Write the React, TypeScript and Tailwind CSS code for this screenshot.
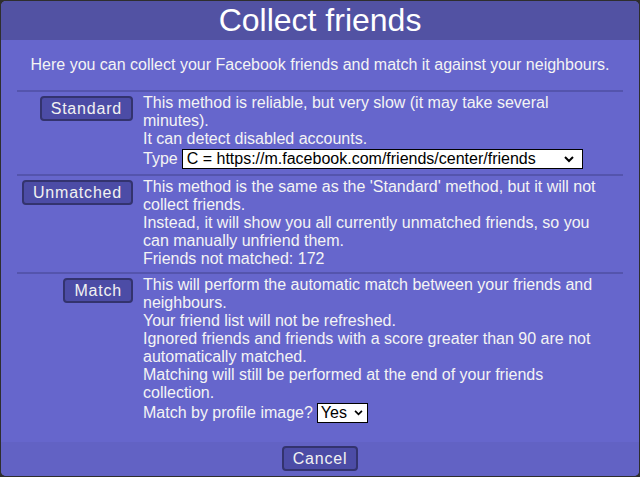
import React from "react";

const font = { fontFamily: '"Liberation Sans", Arial, sans-serif' };

function Btn({ children }: { children: React.ReactNode }) {
  return (
    <button className="h-[25px] px-[9px] bg-[#4c4ca6] border-2 border-[#33336e] rounded-[4px] text-[16px] leading-[18px] text-[#f2f2f2] tracking-[0.8px]">
      {children}
    </button>
  );
}

function Row({ btn, children }: { btn: string; children: React.ReactNode }) {
  return (
    <div className="grid grid-cols-[126px_1fr] border-t-2 border-[#5454ad]">
      <div className="flex justify-end pr-[10px] pt-[4px]">
        <Btn>{btn}</Btn>
      </div>
      <div className="pt-[2px] pb-[4px] pr-[20px] leading-[18px]">{children}</div>
    </div>
  );
}

export default function App() {
  return (
    <div className="w-[640px] h-[477px] bg-[#2e2e2e] p-[1px]" style={font}>
      <div className="w-full h-full rounded-[5px] overflow-hidden bg-[#6666cc] flex flex-col text-[#f4f4f4] text-[16px]">
        <div className="h-[39px] bg-[#5252a3] flex items-center justify-center text-[32px] leading-[40px] text-white pb-[1px]">
          Collect friends
        </div>
        <div className="flex-1 px-[16px]">
          <div className="text-center pt-[16px] pb-[16px] leading-[18px]">
            Here you can collect your Facebook friends and match it against your neighbours.
          </div>
          <Row btn="Standard">
            <div>This method is reliable, but very slow (it may take several minutes).</div>
            <div>It can detect disabled accounts.</div>
            <div className="flex items-center h-[22px]">
              Type
              <span className="ml-[4px] w-[401px] h-[20px] bg-white border border-black text-black flex items-center justify-between pl-[4px] pr-[8px] leading-[18px]">
                <span>C = https://m.facebook.com/friends/center/friends</span>
                <svg width="10" height="7" viewBox="0 0 10 7"><path d="M1 1l4 4 4-4" stroke="#000" strokeWidth="2" fill="none" /></svg>
              </span>
            </div>
          </Row>
          <Row btn="Unmatched">
            <div>This method is the same as the 'Standard' method, but it will not collect friends.</div>
            <div>Instead, it will show you all currently unmatched friends, so you can manually unfriend them.</div>
            <div>Friends not matched: 172</div>
          </Row>
          <Row btn="Match">
            <div>This will perform the automatic match between your friends and neighbours.</div>
            <div>Your friend list will not be refreshed.</div>
            <div>Ignored friends and friends with a score greater than 90 are not automatically matched.</div>
            <div>Matching will still be performed at the end of your friends collection.</div>
            <div className="flex items-center h-[22px]">
              Match by profile image?
              <span className="ml-[4px] w-[51px] h-[20px] bg-white border border-black text-black flex items-center justify-between pl-[3px] pr-[4px] leading-[18px]">
                <span>Yes</span>
                <svg width="9" height="6" viewBox="0 0 10 7"><path d="M1 1l4 4 4-4" stroke="#000" strokeWidth="2" fill="none" /></svg>
              </span>
            </div>
          </Row>
        </div>
        <div className="h-[34px] bg-[#6262c4] flex justify-center pt-[4px]">
          <Btn>Cancel</Btn>
        </div>
      </div>
    </div>
  );
}
